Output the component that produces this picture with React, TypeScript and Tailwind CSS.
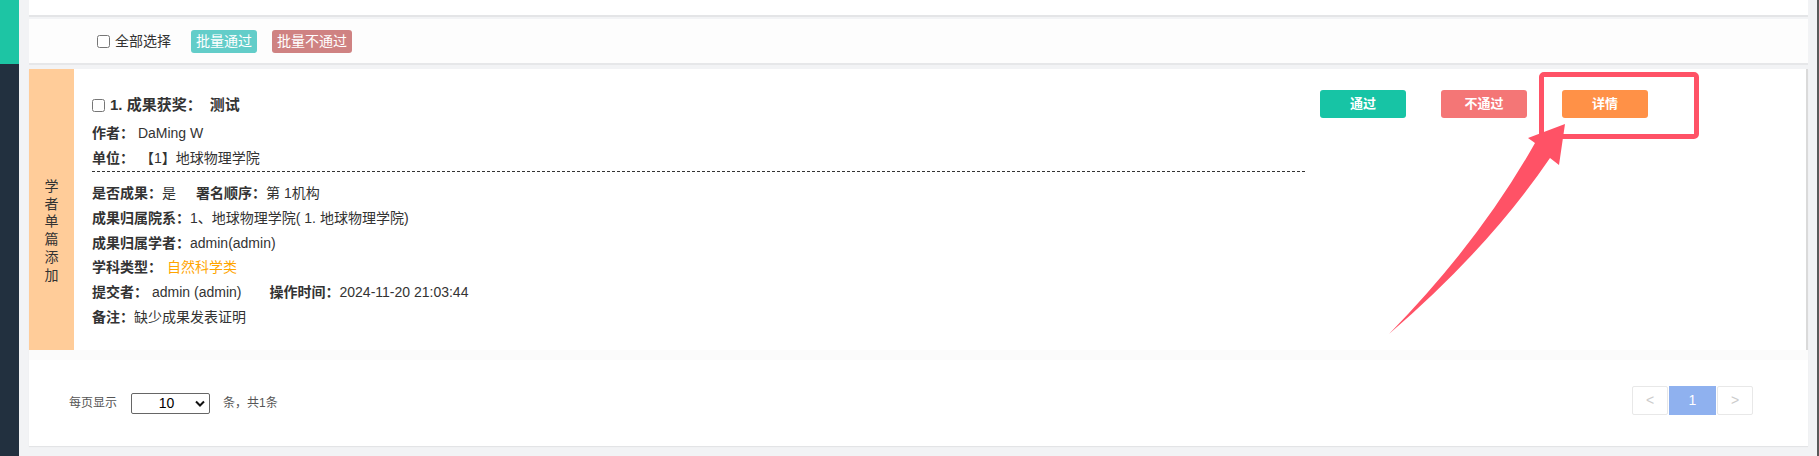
import { useState } from "react";

const font = "font-['Liberation_Sans','Noto_Sans_CJK_SC',sans-serif]";

function Line({ label, children }: { label: string; children: React.ReactNode }) {
    return (
        <div className="leading-[24.8px] whitespace-nowrap">
            <span className="font-bold">{label}</span>
            {children}
        </div>
    );
}

export default function App() {
    const [all, setAll] = useState(false);
    const [item, setItem] = useState(false);
    const [pageSize] = useState(10);

    return (
        <div className={`w-[1819px] h-[456px] bg-[#f2f3f5] flex overflow-hidden relative text-[#333] ${font}`}>
            {/* sidebar */}
            <div className="w-[19px] h-full flex flex-col">
                <div className="h-[64px] bg-[#1dc5a4]"></div>
                <div className="flex-1 bg-[#22303f]"></div>
            </div>

            <div className="ml-[10px] w-[1779px] flex flex-col">
                <div className="h-[17px] bg-white border-b-2 border-[#e4e5e7]"></div>

                {/* toolbar */}
                <div className="mt-[2px] h-[46px] bg-[#fdfdfd] border-b-2 border-[#e6e7e9] flex items-center pl-[68px] text-[14px]">
                    <input type="checkbox" className="w-[13px] h-[13px] m-0" checked={all} onChange={(e) => setAll(e.target.checked)} />
                    <span className="ml-[5px]">全部选择</span>
                    <span className="ml-[20px] h-[23px] w-[66px] rounded-[3px] bg-[#63cdc9] text-white flex items-center justify-center">批量通过</span>
                    <span className="ml-[15px] h-[23px] w-[80px] rounded-[3px] bg-[#cf8282] text-white flex items-center justify-center">批量不通过</span>
                </div>

                {/* main card */}
                <div className="mt-[4px] bg-white flex flex-col shadow-[0_1px_1px_rgba(0,0,0,0.06)]">
                    <div className="h-[281px] flex border-r-2 border-[#dadada]">
                        <div className="w-[45px] bg-[#ffcc99] pt-[109px] flex flex-col items-center text-[14px] leading-[17.7px]">
                            {"学者单篇添加".split("").map((c) => (
                                <span key={c}>{c}</span>
                            ))}
                        </div>

                        <div className="flex pl-[18px] pt-[21px] text-[14px]">
                            <div className="w-[1213px]">
                                <div className="h-[30px] flex items-center font-bold text-[15px]">
                                    <input type="checkbox" className="w-[13px] h-[13px] m-0" checked={item} onChange={(e) => setItem(e.target.checked)} />
                                    <span className="ml-[5px]">1. 成果获奖：</span>
                                    <span className="ml-[8px]">测试</span>
                                </div>
                                <div className="leading-[25px] pt-[1px]">
                                    <div><span className="font-bold">作者：</span> <span>DaMing W</span></div>
                                    <div><span className="font-bold">单位：</span> <span className="ml-[2px]">【1】地球物理学院</span></div>
                                </div>
                                <div className="border-t border-dashed border-[#333]"></div>
                                <div className="pt-[9px]">
                                    <Line label="是否成果：">是<span className="font-bold ml-[20px]">署名顺序：</span>第 1机构</Line>
                                    <Line label="成果归属院系：">1、地球物理学院( 1. 地球物理学院)</Line>
                                    <Line label="成果归属学者：">admin(admin)</Line>
                                    <Line label="学科类型：">
                                        <span className="ml-[5px] text-[#ffa500]">自然科学类</span>
                                    </Line>
                                    <Line label="提交者：">
                                        <span className="ml-[4px]">admin (admin)</span>
                                        <span className="font-bold ml-[28px]">操作时间：</span>2024-11-20 21:03:44
                                    </Line>
                                    <Line label="备注：">缺少成果发表证明</Line>
                                </div>
                            </div>

                            <div className="ml-[15px] flex gap-[35px] text-[13px] font-bold text-white">
                                <button className="w-[86px] h-[28px] rounded-[3px] bg-[#17c4a5]">通过</button>
                                <button className="w-[86px] h-[28px] rounded-[3px] bg-[#f47676]">不通过</button>
                                <button className="w-[86px] h-[28px] rounded-[3px] bg-[#ff9147]">详情</button>
                            </div>
                        </div>
                    </div>

                    {/* footer */}
                    <div className="h-[96px] border-t-[10px] border-[#fbfbfb] flex items-center justify-between pl-[40px] pr-[55px] text-[12px] text-[#555]">
                        <div className="flex items-center">
                            <span>每页显示</span>
                            <div className="ml-[14px] w-[79px] h-[21px] border border-[#666] rounded-[2px] flex items-center text-[14px] text-black">
                                <span className="flex-1 text-center pl-[6px]">{pageSize}</span>
                                <svg width="10" height="7" viewBox="0 0 10 7" className="mr-[4px]">
                                    <path d="M1 1.5 L5 5.5 L9 1.5" fill="none" stroke="#111" strokeWidth="2" />
                                </svg>
                            </div>
                            <span className="ml-[13px]">条，共1条</span>
                        </div>
                        <div className="flex gap-[1px] mb-[5px] text-[14px]">
                            <div className="w-[36px] h-[29px] border border-[#e8e8e8] rounded-[2px] flex items-center justify-center text-[#ccc]">&lt;</div>
                            <div className="w-[47px] h-[29px] bg-[#8fb1ef] flex items-center justify-center text-white">1</div>
                            <div className="w-[36px] h-[29px] border border-[#e8e8e8] rounded-[2px] flex items-center justify-center text-[#ccc]">&gt;</div>
                        </div>
                    </div>
                </div>
            </div>

            <div className="ml-[9px] w-[2px] h-full bg-[#5a5a5a]"></div>

            {/* annotation */}
            <div className="absolute left-[1539px] top-[72px] w-[160px] h-[67px] border-[5px] border-[#ff5266] rounded-[5px]"></div>
            <svg className="absolute left-[1380px] top-[115px]" width="190" height="225" viewBox="0 0 190 225">
                <path d="M185 9 L148 23 L155 28 Q100 126 9 219 Q108 134 170 43 L179 50 Z" fill="#ff5266" />
            </svg>
        </div>
    );
}
